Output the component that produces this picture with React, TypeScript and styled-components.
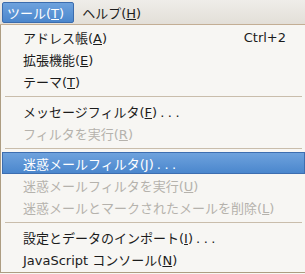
import React, { FC } from "react";
import styled, { createGlobalStyle, css } from "styled-components";

const GlobalStyle = createGlobalStyle`
  html, body {
    margin: 0;
    padding: 0;
    background: #f7f6f3;
    overflow: hidden;
  }
`;

const Page = styled.div`
  width: 305px;
  height: 274px;
  overflow: hidden;
  font-family: "DejaVu Sans", "Noto Sans CJK JP", sans-serif;
  font-size: 13px;
  color: #1c1c1c;
  background: #f7f6f3;
`;

const MenuBar = styled.div`
  height: 24px;
  display: flex;
  align-items: center;
  padding: 0 2px;
  background: linear-gradient(#efede9, #e3dfd8);
  border-bottom: 1px solid #c3ae94;
`;

const MenuBarItem = styled.div<{ $active?: boolean }>`
  height: 21px;
  box-sizing: border-box;
  display: flex;
  align-items: center;
  padding: 0 9px 0 4px;
  margin-right: 3px;
  border: 1px solid transparent;
  border-radius: 2px;
  color: #1c1c1c;
  ${(p) =>
    p.$active &&
    css`
      color: #ffffff;
      background: linear-gradient(#6ea2dd, #4b87cd);
      border-color: #3b6cad;
    `}
`;

const Menu = styled.div`
  width: 306px;
  box-sizing: border-box;
  background: #f7f6f3;
  border-left: 1px solid #ad9d82;
  border-bottom: 1px solid #ad9d82;
  padding: 1px 1px 2px 1px;
`;

const Item = styled.div<{ $disabled?: boolean; $hover?: boolean }>`
  height: 22px;
  box-sizing: border-box;
  display: flex;
  align-items: center;
  padding: 0 18px 0 20px;
  border: 1px solid transparent;
  color: ${(p) => (p.$disabled ? "#b5b2ac" : "#1c1c1c")};
  white-space: nowrap;
  ${(p) =>
    p.$hover &&
    css`
      color: #ffffff;
      background: linear-gradient(#6ea2dd, #4b87cd);
      border-color: #3d6eb0;
    `}
`;

const Tail = styled.span`
  margin-left: 3px;
  letter-spacing: 3.5px;
`;

const Shortcut = styled.span`
  margin-left: auto;
`;

const Separator = styled.div`
  height: 8px;
  display: flex;
  align-items: center;
  padding: 0 3px;

  &::after {
    content: "";
    flex: 1;
    height: 1px;
    background: #c9bdab;
  }
`;

type Entry =
  | { sep: true }
  | {
      sep?: false;
      label: string;
      key: string;
      dots?: boolean;
      shortcut?: string;
      disabled?: boolean;
      hover?: boolean;
    };

const entries: Entry[] = [
  { label: "アドレス帳", key: "A", shortcut: "Ctrl+2" },
  { label: "拡張機能", key: "E" },
  { label: "テーマ", key: "T" },
  { sep: true },
  { label: "メッセージフィルタ", key: "F", dots: true },
  { label: "フィルタを実行", key: "R", disabled: true },
  { sep: true },
  { label: "迷惑メールフィルタ", key: "J", dots: true, hover: true },
  { label: "迷惑メールフィルタを実行", key: "U", disabled: true },
  { label: "迷惑メールとマークされたメールを削除", key: "L", disabled: true },
  { sep: true },
  { label: "設定とデータのインポート", key: "I", dots: true },
  { label: "JavaScript コンソール", key: "N" },
];

const Label: FC<{ text: string; mnemonic: string; dots?: boolean }> = ({
  text,
  mnemonic,
  dots,
}) => (
  <span>
    {text}(<u>{mnemonic}</u>){dots && <Tail>...</Tail>}
  </span>
);

const App: FC = () => {
  return (
    <>
      <GlobalStyle />
      <Page>
        <MenuBar>
          <MenuBarItem $active>
            <Label text="ツール" mnemonic="T" />
          </MenuBarItem>
          <MenuBarItem>
            <Label text="ヘルプ" mnemonic="H" />
          </MenuBarItem>
        </MenuBar>
        <Menu>
          {entries.map((e, i) =>
            e.sep ? (
              <Separator key={i} />
            ) : (
              <Item key={i} $disabled={e.disabled} $hover={e.hover}>
                <Label text={e.label} mnemonic={e.key} dots={e.dots} />
                {e.shortcut && <Shortcut>{e.shortcut}</Shortcut>}
              </Item>
            )
          )}
        </Menu>
      </Page>
    </>
  );
};

export default App;
